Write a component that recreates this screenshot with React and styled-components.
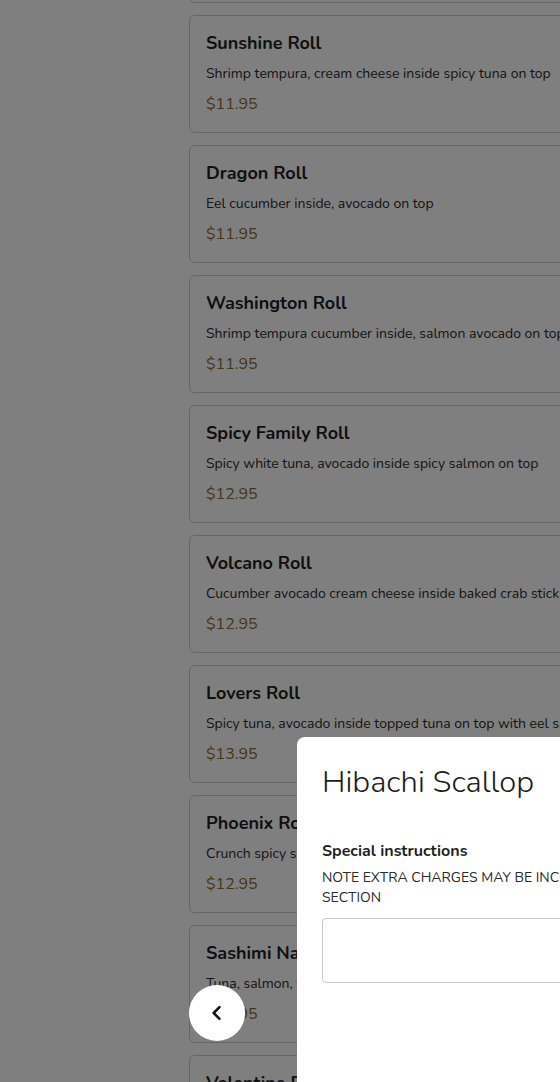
import styled, { createGlobalStyle } from "styled-components";

const GlobalStyle = createGlobalStyle`
  html, body {
    margin: 0;
    padding: 0;
    background: #ffffff;
    overflow: hidden;
    font-family: "Nunito", "Lato", "Open Sans", sans-serif;
    color: #1f1f1f;
  }
`;

const rolls = [
  { name: "Rainbow Roll", desc: "Crab stick cucumber inside, assorted fish on top", price: "$12.95" },
  { name: "Sunshine Roll", desc: "Shrimp tempura, cream cheese inside spicy tuna on top", price: "$11.95" },
  { name: "Dragon Roll", desc: "Eel cucumber inside, avocado on top", price: "$11.95" },
  { name: "Washington Roll", desc: "Shrimp tempura cucumber inside, salmon avocado on top", price: "$11.95" },
  { name: "Spicy Family Roll", desc: "Spicy white tuna, avocado inside spicy salmon on top", price: "$12.95" },
  { name: "Volcano Roll", desc: "Cucumber avocado cream cheese inside baked crab stick on top", price: "$12.95" },
  { name: "Lovers Roll", desc: "Spicy tuna, avocado inside topped tuna on top with eel sauce", price: "$13.95" },
  { name: "Phoenix Roll", desc: "Crunch spicy salmon inside, tuna avocado on top", price: "$12.95" },
  { name: "Sashimi Naruto", desc: "Tuna, salmon, white fish wrapped in cucumber", price: "$13.95" },
  { name: "Valentine Roll", desc: "Spicy tuna inside, tuna on top", price: "$13.95" },
];

const Page = styled.div`
  display: flex;
  align-items: flex-start;
  width: 560px;
  height: 1082px;
  overflow: hidden;
`;

const Side = styled.div`
  flex: 0 0 189px;
`;

const List = styled.div`
  display: flex;
  flex-direction: column;
  gap: 12px;
  margin-top: -115px;
`;

const Card = styled.div`
  flex-shrink: 0;
  width: 440px;
  box-sizing: border-box;
  height: 118px;
  border: 1px solid #cccccc;
  border-radius: 6px;
  padding: 15px 16px;
  background: #ffffff;
`;

const Name = styled.div`
  font-size: 18px;
  font-weight: 700;
  line-height: 24px;
`;

const Desc = styled.div`
  margin-top: 9px;
  font-size: 14px;
  line-height: 20px;
  white-space: nowrap;
  color: #2a2a2a;
`;

const Price = styled.div`
  margin-top: 8px;
  font-size: 16px;
  line-height: 24px;
  color: #8c6d35;
`;

const Overlay = styled.div`
  position: fixed;
  inset: 0;
  background: rgba(0, 0, 0, 0.5);
`;

const Modal = styled.div`
  position: fixed;
  left: 297px;
  top: 737px;
  width: 440px;
  height: 420px;
  box-sizing: border-box;
  background: #ffffff;
  border-radius: 8px;
  padding: 24px 25px;
`;

const Title = styled.h2`
  margin: 0;
  font-size: 31px;
  font-weight: 300;
  line-height: 42px;
  color: #1c1c1c;
`;

const Label = styled.div`
  margin-top: 38px;
  font-size: 16px;
  font-weight: 700;
  line-height: 20px;
`;

const Note = styled.div`
  margin-top: 7px;
  font-size: 14px;
  line-height: 20px;
  color: #2a2a2a;
  width: 370px;
`;

const Field = styled.textarea`
  display: block;
  margin-top: 10px;
  width: 390px;
  height: 65px;
  box-sizing: border-box;
  border: 1px solid #c8c8c8;
  border-radius: 4px;
  resize: none;
  font: inherit;
`;

const BackButton = styled.button`
  position: fixed;
  left: 189px;
  top: 985px;
  width: 56px;
  height: 56px;
  border-radius: 50%;
  border: none;
  background: #ffffff;
  display: flex;
  align-items: center;
  justify-content: center;
  padding: 0;
  cursor: pointer;
`;

export default function App() {
  return (
    <>
      <GlobalStyle />
      <Page>
        <Side />
        <List>
          {rolls.map((r) => (
            <Card key={r.name}>
              <Name>{r.name}</Name>
              <Desc>{r.desc}</Desc>
              <Price>{r.price}</Price>
            </Card>
          ))}
        </List>
      </Page>
      <Overlay />
      <Modal>
        <Title>Hibachi Scallop</Title>
        <Label>Special instructions</Label>
        <Note>NOTE EXTRA CHARGES MAY BE INCURRED FOR THIS SECTION</Note>
        <Field />
      </Modal>
      <BackButton aria-label="Back">
        <svg width="20" height="20" viewBox="0 0 24 24" fill="none" stroke="#111" strokeWidth="3" strokeLinecap="round" strokeLinejoin="round">
          <path d="M15 5l-7 7 7 7" />
        </svg>
      </BackButton>
    </>
  );
}
